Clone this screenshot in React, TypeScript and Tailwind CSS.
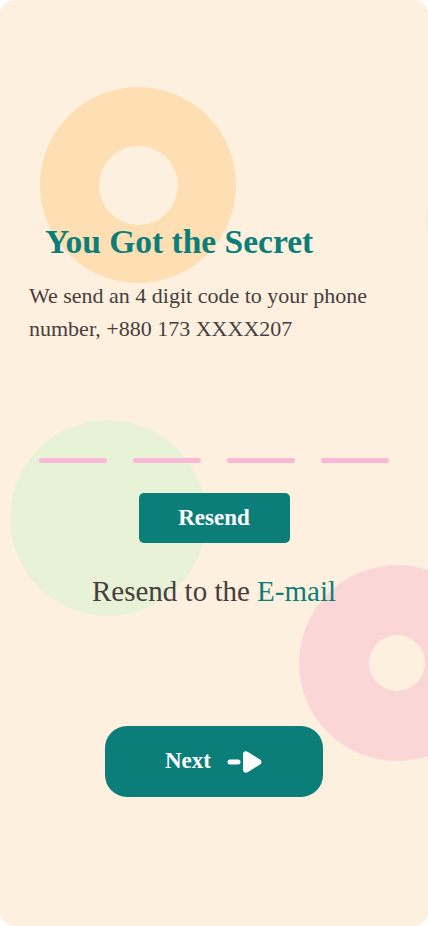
import React from 'react';

const serif = { fontFamily: '"Liberation Serif", "DejaVu Serif", serif' };

function ArrowIcon() {
  return (
    <svg width="36" height="24" viewBox="0 0 36 24" fill="none">
      <line x1="3" y1="12" x2="11" y2="12" stroke="white" strokeWidth="5" strokeLinecap="round" />
      <path d="M16 4.5 C16 1.5 18.5 0.5 21 2 L33 9.5 C35 11 35 13 33 14.5 L21 22 C18.5 23.5 16 22.5 16 19.5 Z" fill="white" />
    </svg>
  );
}

function App() {
  const dashes = [1, 2, 3, 4];

  return (
    <div className="min-h-screen bg-white" style={serif}>
      <div className="relative h-[926px] w-[428px] overflow-hidden rounded-[14px] bg-[#fef0de]">
        {/* background shapes */}
        <div className="absolute left-[40px] top-[87px] flex h-[196px] w-[196px] items-center justify-center rounded-full bg-[#fddfb3]">
          <div className="h-[79px] w-[79px] rounded-full bg-[#fef0de]" />
        </div>
        <div className="absolute left-[427px] top-[160px] h-[120px] w-[120px] rounded-full bg-[#e3efe3]" />
        <div className="absolute left-[10px] top-[420px] h-[196px] w-[196px] rounded-full bg-[#e7f2d6]" />
        <div className="absolute left-[299px] top-[565px] flex h-[196px] w-[196px] items-center justify-center rounded-full bg-[#fbd6d7]">
          <div className="h-[56px] w-[56px] rounded-full bg-[#fef0de]" />
        </div>

        <div className="relative flex flex-col">
          <h1 className="ml-[45px] mt-[223px] text-[33.5px] font-bold leading-[38px] text-[#0c7e7a]">You Got the Secret</h1>
          <p className="ml-[29px] mt-[18px] w-[390px] text-[22px] leading-[33px] text-[#473e3e]">
            We send an 4 digit code to your phone number, +880 173 XXXX207
          </p>

          <div className="ml-[39px] mt-[113px] flex gap-[26px]">
            {dashes.map((d) => (
              <div key={d} className="h-[5px] w-[68px] rounded-full bg-[#f9b8d4]" />
            ))}
          </div>

          <button className="mx-auto mt-[30px] h-[50px] w-[151px] rounded-[5px] bg-[#0c7e7a] text-[23px] font-bold text-white">
            Resend
          </button>

          <p className="mt-[28px] text-center text-[29px] leading-[40px] text-[#473e3e]">
            Resend to the <span className="text-[#0c7e7a]">E-mail</span>
          </p>

          <button className="mx-auto mt-[115px] flex h-[71px] w-[218px] items-center justify-center gap-[16px] rounded-[22px] bg-[#0c7e7a] text-[23px] font-bold text-white">
            <span>Next</span>
            <ArrowIcon />
          </button>
        </div>
      </div>
    </div>
  );
}

export default App;
